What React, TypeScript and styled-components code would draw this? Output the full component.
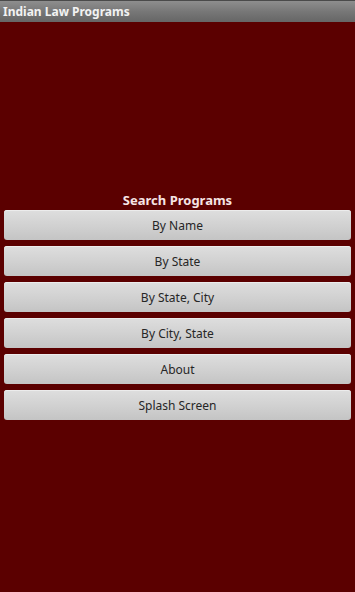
import React from "react";
import styled, { createGlobalStyle } from "styled-components";

const GlobalStyle = createGlobalStyle`
  html, body { margin: 0; padding: 0; background: #5b0000; }
  body { font-family: "Noto Sans", "Open Sans", "DejaVu Sans", sans-serif; }
`;

const Screen = styled.div`
  width: 355px;
  height: 592px;
  display: flex;
  flex-direction: column;
  background: #5b0000;
  overflow: hidden;
`;

const TitleBar = styled.div`
  height: 22px;
  box-sizing: border-box;
  display: flex;
  align-items: center;
  padding-left: 3px;
  background: linear-gradient(#8e8e8e, #777 50%, #666);
  border-top: 1px solid #4a4a4a;
  color: #f2f2f2;
  font-weight: 700;
  font-size: 12px;
`;

const Content = styled.div`
  display: flex;
  flex-direction: column;
  padding: 169px 4px 0 4px;
`;

const Heading = styled.div`
  height: 19px;
  line-height: 19px;
  text-align: center;
  color: #f6e4e4;
  font-weight: 700;
  font-size: 13px;
`;

const ButtonList = styled.div`
  display: flex;
  flex-direction: column;
  gap: 6px;
`;

const MenuButton = styled.button`
  height: 30px;
  width: 100%;
  margin: 0;
  padding: 0;
  border: none;
  border-radius: 3px;
  background: linear-gradient(#dedede, #cfcfcf 60%, #c4c4c4);
  box-shadow: inset 0 1px 0 #ececec;
  color: #262626;
  font-family: "Noto Sans", "Open Sans", "DejaVu Sans", sans-serif;
  font-size: 12px;
  display: flex;
  align-items: center;
  justify-content: center;
`;

const items = ["By Name", "By State", "By State, City", "By City, State", "About", "Splash Screen"];

export default function App() {
  return (
    <>
      <GlobalStyle />
      <Screen>
        <TitleBar>Indian Law Programs</TitleBar>
        <Content>
          <Heading>Search Programs</Heading>
          <ButtonList>
            {items.map((t) => (
              <MenuButton key={t}>{t}</MenuButton>
            ))}
          </ButtonList>
        </Content>
      </Screen>
    </>
  );
}
